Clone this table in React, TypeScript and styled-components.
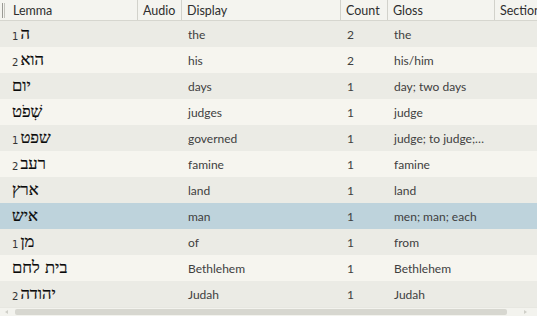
import React from "react";
import styled, { createGlobalStyle, css } from "styled-components";

const Global = createGlobalStyle`
  html, body { margin: 0; padding: 0; background: #f6f5ef; }
  body { font-family: Lato, "Noto Sans", sans-serif; }
`;

const COLS = "138px 44px 159px 47px 107px 120px";

const Frame = styled.div`
  width: 537px;
  height: 316px;
  overflow: hidden;
  position: relative;
  background: #f6f5ef;
  display: flex;
  flex-direction: column;
`;

const Grid = styled.div`
  display: grid;
  grid-template-columns: ${COLS};
  width: max-content;
`;

const HeaderRow = styled(Grid)`
  height: 21px;
  background: #f4f4ef;
  border-bottom: 1px solid #d6d6cf;
  box-sizing: border-box;
  position: relative;
`;

const Grip = styled.div`
  position: absolute;
  left: 2px;
  top: 3px;
  width: 3px;
  height: 15px;
  border-left: 1px solid #9a9a94;
  border-right: 1px solid #c4c4bd;
  box-sizing: border-box;
`;

const HeadCell = styled.div<{ $pad?: number }>`
  display: flex;
  align-items: center;
  padding-left: ${(p) => p.$pad ?? 5}px;
  font-size: 12.5px;
  color: #2e2e2e;
  border-right: 1px solid #d2d2cb;
  white-space: nowrap;
  overflow: hidden;
`;

const Row = styled(Grid)<{ $odd: boolean; $sel?: boolean }>`
  height: 26px;
  background: ${(p) => (p.$sel ? "#bed3dc" : p.$odd ? "#ebebe5" : "#f6f5ef")};
`;

const Cell = styled.div<{ $pad?: number }>`
  display: flex;
  align-items: center;
  padding-left: ${(p) => p.$pad ?? 6}px;
  font-size: 12px;
  color: #404040;
  white-space: nowrap;
  overflow: hidden;
`;

const Num = styled.span`
  font-family: "DejaVu Sans", sans-serif;
  font-size: 10px;
  color: #333;
  margin-right: 2px;
  position: relative;
  top: 2px;
`;

const Heb = styled.span`
  font-family: "DejaVu Serif", "Liberation Serif", "DejaVu Sans", serif;
  font-size: 16.5px;
  color: #0a0a0a;
  -webkit-text-stroke: 0.2px #0a0a0a;
`;

const ScrollBar = styled.div`
  height: 9px;
  display: flex;
  align-items: center;
  background: #f3f3ee;
  border-top: 1px solid #e7e7e1;
  box-sizing: border-box;
  padding: 0 6px 0 0;
`;

const Arrow = styled.div<{ $dir: "l" | "r" }>`
  width: 0;
  height: 0;
  border-top: 2.5px solid transparent;
  border-bottom: 2.5px solid transparent;
  ${(p) =>
    p.$dir === "l"
      ? css`border-right: 3px solid #cfcfc8; margin: 0 7px 0 5px;`
      : css`border-left: 3px solid #cfcfc8; margin: 0 4px 0 17px;`}
`;

const Thumb = styled.div`
  flex: 1;
  height: 6px;
  border-radius: 2px;
  background: #d7d7d0;
`;

type R = {
  num?: string;
  heb: string;
  display: string;
  count: string;
  gloss: string;
};

const rows: R[] = [
  { num: "1", heb: "ה", display: "the", count: "2", gloss: "the" },
  { num: "2", heb: "הוא", display: "his", count: "2", gloss: "his/him" },
  { heb: "יום", display: "days", count: "1", gloss: "day; two days" },
  { heb: "שְׁפֹט", display: "judges", count: "1", gloss: "judge" },
  { num: "1", heb: "שפט", display: "governed", count: "1", gloss: "judge; to judge;…" },
  { num: "2", heb: "רעב", display: "famine", count: "1", gloss: "famine" },
  { heb: "ארץ", display: "land", count: "1", gloss: "land" },
  { heb: "איש", display: "man", count: "1", gloss: "men; man; each" },
  { num: "1", heb: "מן", display: "of", count: "1", gloss: "from" },
  { heb: "בית לחם", display: "Bethlehem", count: "1", gloss: "Bethlehem" },
  { num: "2", heb: "יהודה", display: "Judah", count: "1", gloss: "Judah" },
];

export default function App() {
  return (
    <>
      <Global />
      <Frame>
        <HeaderRow>
          <Grip />
          <HeadCell $pad={13}>Lemma</HeadCell>
          <HeadCell>Audio</HeadCell>
          <HeadCell>Display</HeadCell>
          <HeadCell>Count</HeadCell>
          <HeadCell>Gloss</HeadCell>
          <HeadCell>Section</HeadCell>
        </HeaderRow>
        {rows.map((r, i) => (
          <Row key={i} $odd={i % 2 === 0} $sel={i === 7}>
            <Cell $pad={12}>
              {r.num && <Num>{r.num}</Num>}
              <Heb dir="rtl">{r.heb}</Heb>
            </Cell>
            <Cell />
            <Cell>{r.display}</Cell>
            <Cell>{r.count}</Cell>
            <Cell>{r.gloss}</Cell>
            <Cell />
          </Row>
        ))}
        <ScrollBar>
          <Arrow $dir="l" />
          <Thumb />
          <Arrow $dir="r" />
        </ScrollBar>
      </Frame>
    </>
  );
}
